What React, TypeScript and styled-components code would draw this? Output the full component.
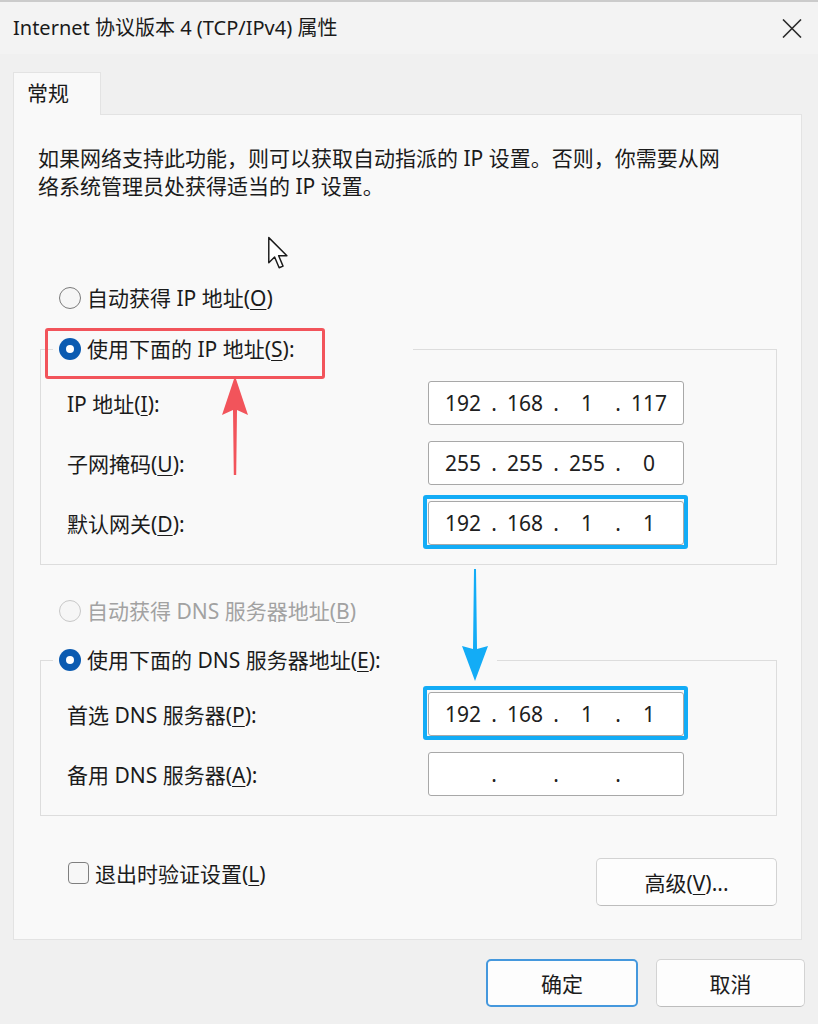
import React from "react";
import styled, { createGlobalStyle } from "styled-components";

const GlobalStyle = createGlobalStyle`
  html, body {
    margin: 0;
    padding: 0;
  }
  body {
    background: #f0f0f0;
    font-family: "Noto Sans", "Noto Sans CJK SC", sans-serif;
    font-size: 21px;
    color: #1b1b1b;
  }
  * {
    box-sizing: border-box;
  }
`;

const Window = styled.div`
  width: 818px;
  height: 1024px;
  display: flex;
  flex-direction: column;
  background: #f0f0f0;
  overflow: hidden;
`;

const TitleBar = styled.div`
  height: 54px;
  border-top: 2px solid #cbcbcb;
  background: #f3f3f3;
  display: flex;
  align-items: center;
  justify-content: space-between;
  padding: 0 16px 0 13px;
`;

const Title = styled.div`
  font-size: 20px;
  line-height: 1;
  color: #1a1a1a;
`;

const CloseButton = styled.button`
  width: 20px;
  height: 20px;
  padding: 0;
  border: none;
  background: transparent;
  display: flex;
  align-items: center;
  justify-content: center;
`;

const Body = styled.div`
  padding: 18px 13px 0 13px;
  display: flex;
  flex-direction: column;
`;

const TabStrip = styled.div`
  display: flex;
`;

const Tab = styled.div`
  width: 88px;
  height: 43px;
  margin-bottom: -1px;
  position: relative;
  z-index: 1;
  background: #f9f9f9;
  border: 1px solid #e3e3e3;
  border-bottom: none;
  line-height: 40px;
  padding-left: 13px;
`;

const TabPanel = styled.div`
  position: relative;
  width: 789px;
  height: 826px;
  background: #f9f9f9;
  border: 1px solid #e3e3e3;
  padding: 29px 24px 0 26px;
  display: flex;
  flex-direction: column;
`;

const Description = styled.p`
  margin: 0 0 0 -2px;
  line-height: 28px;
  white-space: nowrap;
`;

const Option = styled.label<{ $inset?: number; $gap?: number; $disabled?: boolean }>`
  display: flex;
  align-items: center;
  gap: 6px;
  height: 28px;
  margin-top: ${(p) => p.$gap ?? 0}px;
  padding-left: ${(p) => p.$inset ?? 0}px;
  line-height: 28px;
  white-space: nowrap;
  color: ${(p) => (p.$disabled ? "#a2a2a2" : "#1b1b1b")};
`;

const Radio = styled.span<{ $checked?: boolean; $disabled?: boolean }>`
  position: relative;
  flex: none;
  width: 22px;
  height: 22px;
  border-radius: 50%;
  background: ${(p) => (p.$checked ? "#0b5bb1" : "#f6f6f6")};
  border: ${(p) =>
    p.$checked ? "none" : `1.5px solid ${p.$disabled ? "#c8c8c8" : "#7b7b7b"}`};

  &::after {
    content: "";
    display: ${(p) => (p.$checked ? "block" : "none")};
    position: absolute;
    left: 7px;
    top: 7px;
    width: 8px;
    height: 8px;
    border-radius: 50%;
    background: #ffffff;
  }
`;

const Key = styled.u`
  text-decoration-thickness: 1px;
  text-underline-offset: 3px;
`;

const Group = styled.fieldset<{ $gap: number }>`
  margin: ${(p) => p.$gap}px 0 0;
  padding: 18px 92px 19px 26px;
  border: 1px solid #dddddd;
  display: flex;
  flex-direction: column;
  gap: 16px;
  min-width: 0;
`;

const Legend = styled.legend<{ $span: number }>`
  width: ${(p) => p.$span}px;
  margin-left: -14px;
  padding: 0 0 0 6px;
`;

/* red frame drawn round the chosen option */
const Marked = styled.span`
  position: relative;
  display: inline-flex;

  &::after {
    content: "";
    position: absolute;
    left: -14px;
    top: -7px;
    width: 274px;
    height: 45px;
    border: 3px solid #f2545b;
    border-radius: 3px;
  }
`;

const FieldRow = styled.div`
  display: flex;
  align-items: center;
  justify-content: space-between;
  white-space: nowrap;
`;

const Field = styled.div<{ $marked?: boolean }>`
  position: relative;
  width: 256px;
  height: 44px;
  background: #ffffff;
  border: 1px solid #a8a8a8;
  border-radius: 3px;
  display: flex;
  align-items: center;
  padding-left: 14px;
  color: #202020;

  &::after {
    content: "";
    display: ${(p) => (p.$marked ? "block" : "none")};
    position: absolute;
    inset: -7px -5px -5px -6px;
    border: 4px solid #13acf6;
    border-radius: 3px;
  }
`;

const Octet = styled.span`
  width: 40px;
  text-align: center;
`;

const Dot = styled.span`
  width: 22px;
  text-align: center;
`;

const PanelFooter = styled.div`
  margin-top: 42px;
  display: flex;
  justify-content: space-between;
  align-items: flex-start;
`;

const CheckOption = styled.label`
  display: flex;
  align-items: center;
  gap: 6px;
  height: 30px;
  padding-left: 28px;
`;

const CheckBox = styled.span`
  width: 21px;
  height: 22px;
  border: 1.5px solid #7f7f7f;
  border-radius: 4px;
  background: #f7f7f7;
`;

const Button = styled.button<{ $width: number; $primary?: boolean }>`
  width: ${(p) => p.$width}px;
  height: 48px;
  background: #fdfdfd;
  border: ${(p) => (p.$primary ? "2px solid #4598dd" : "1px solid #d3d3d3")};
  border-bottom-color: ${(p) => (p.$primary ? "#4598dd" : "#bdbdbd")};
  border-radius: 5px;
  font-family: inherit;
  font-size: 21px;
  color: #1b1b1b;
  padding: 0;
`;

const Footer = styled.div`
  margin-top: 19px;
  display: flex;
  justify-content: flex-end;
  gap: 18px;
`;

const Overlay = styled.svg<{ $left: number; $top: number }>`
  position: absolute;
  left: ${(p) => p.$left}px;
  top: ${(p) => p.$top}px;
  overflow: visible;
`;

const IpField = ({ parts, marked }: { parts: string[]; marked?: boolean }) => (
  <Field $marked={marked}>
    {parts.map((part, i) => (
      <React.Fragment key={i}>
        <Octet>{part}</Octet>
        {i < 3 && <Dot>.</Dot>}
      </React.Fragment>
    ))}
  </Field>
);

export default function App() {
  return (
    <Window>
      <GlobalStyle />
      <TitleBar>
        <Title>Internet 协议版本 4 (TCP/IPv4) 属性</Title>
        <CloseButton>
          <svg width="20" height="19" viewBox="0 0 20 19">
            <path d="M1 0.5 L19 18.5 M19 0.5 L1 18.5" stroke="#2b2b2b" strokeWidth="1.6" />
          </svg>
        </CloseButton>
      </TitleBar>

      <Body>
        <TabStrip>
          <Tab>常规</Tab>
        </TabStrip>

        <TabPanel>
          <Description>
            如果网络支持此功能，则可以获取自动指派的 IP 设置。否则，你需要从网
            <br />
            络系统管理员处获得适当的 IP 设置。
          </Description>

          <Option $inset={19} $gap={84}>
            <Radio />
            <span>
              自动获得 IP 地址(<Key>O</Key>)
            </span>
          </Option>

          <Group $gap={23}>
            <Legend $span={360}>
              <Option>
                <Marked>
                  <Option as="span">
                    <Radio $checked />
                    <span>
                      使用下面的 IP 地址(<Key>S</Key>):
                    </span>
                  </Option>
                </Marked>
              </Option>
            </Legend>
            <FieldRow>
              <span>
                IP 地址(<Key>I</Key>):
              </span>
              <IpField parts={["192", "168", "1", "117"]} />
            </FieldRow>
            <FieldRow>
              <span>
                子网掩码(<Key>U</Key>):
              </span>
              <IpField parts={["255", "255", "255", "0"]} />
            </FieldRow>
            <FieldRow>
              <span>
                默认网关(<Key>D</Key>):
              </span>
              <IpField parts={["192", "168", "1", "1"]} marked />
            </FieldRow>
          </Group>

          <Option $inset={19} $gap={32} $disabled>
            <Radio $disabled />
            <span>
              自动获得 DNS 服务器地址(<Key>B</Key>)
            </span>
          </Option>

          <Group $gap={21}>
            <Legend $span={444}>
              <Option>
                <Radio $checked />
                <span>
                  使用下面的 DNS 服务器地址(<Key>E</Key>):
                </span>
              </Option>
            </Legend>
            <FieldRow>
              <span>
                首选 DNS 服务器(<Key>P</Key>):
              </span>
              <IpField parts={["192", "168", "1", "1"]} marked />
            </FieldRow>
            <FieldRow>
              <span>
                备用 DNS 服务器(<Key>A</Key>):
              </span>
              <IpField parts={["", "", "", ""]} />
            </FieldRow>
          </Group>

          <PanelFooter>
            <CheckOption>
              <CheckBox />
              <span>
                退出时验证设置(<Key>L</Key>)
              </span>
            </CheckOption>
            <Button $width={181}>
              高级(<Key>V</Key>)...
            </Button>
          </PanelFooter>

          {/* mouse pointer */}
          <Overlay $left={253} $top={121} width="23" height="34" viewBox="0 0 14 21">
            <path
              d="M1 1 L1 16.5 L4.6 13 L7.4 19.6 L9.8 18.6 L7.1 12.2 L12.2 12.2 Z"
              fill="#ffffff"
              stroke="#1a1a1a"
              strokeWidth="0.9"
              strokeLinejoin="round"
            />
          </Overlay>

          {/* red arrow pointing up at the static option */}
          <Overlay $left={206} $top={260} width="30" height="102" viewBox="0 0 30 102">
            <path d="M15 1 L28 40 L17 35 L16.2 100 L13.8 100 L13 35 L2 40 Z" fill="#f2545b" />
          </Overlay>

          {/* blue arrow pointing down at the DNS field */}
          <Overlay $left={446} $top={452} width="30" height="116" viewBox="0 0 30 116">
            <path d="M14 2 L16 2 L17 82 L28 79 L15 114 L2 79 L13 82 Z" fill="#13acf6" />
          </Overlay>
        </TabPanel>

        <Footer>
          <Button $width={152} $primary>
            确定
          </Button>
          <Button $width={149}>取消</Button>
        </Footer>
      </Body>
    </Window>
  );
}
